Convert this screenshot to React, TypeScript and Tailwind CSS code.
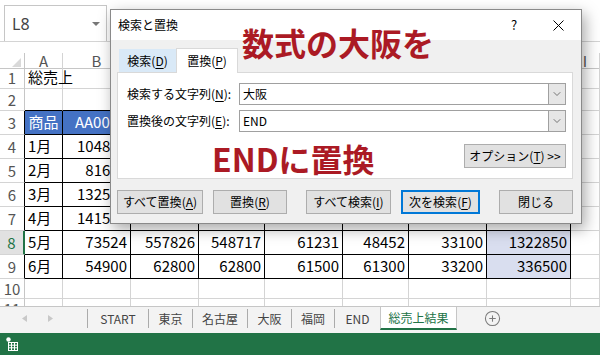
import { ChevronDown, CirclePlus } from "lucide-react";

const GRID = "grid grid-cols-[25px_38px_68px_68px_66px_78px_66px_78px_84px_1fr]";

const letters = ["A", "B", "C", "D", "E", "F", "G", "H", "I"];

const sheet: { n: number; h: string; cells: string[] }[] = [
  { n: 1, h: "h-[22px]", cells: ["総売上"] },
  { n: 2, h: "h-[22px]", cells: [] },
  { n: 3, h: "h-[24px]", cells: ["商品", "AA001", "AA002", "AA003", "AA004", "AA005", "AA006", "合計"] },
  { n: 4, h: "h-[24px]", cells: ["1月", "104852", "98200", "97500", "60100", "51200", "32900", "444752"] },
  { n: 5, h: "h-[24px]", cells: ["2月", "81634", "88400", "86300", "59800", "50600", "32800", "399534"] },
  { n: 6, h: "h-[24px]", cells: ["3月", "132540", "99100", "98200", "61000", "52300", "33000", "476140"] },
  { n: 7, h: "h-[24px]", cells: ["4月", "141580", "97600", "96400", "60800", "51900", "33100", "481380"] },
  { n: 8, h: "h-[24px]", cells: ["5月", "73524", "557826", "548717", "61231", "48452", "33100", "1322850"] },
  { n: 9, h: "h-[24px]", cells: ["6月", "54900", "62800", "62800", "61500", "61300", "33200", "336500"] },
  { n: 10, h: "h-[20px]", cells: [] },
  { n: 11, h: "h-[20px]", cells: [] },
];

function SheetCell({ r, c, v }: { r: number; c: number; v?: string }) {
  const tableRow = r >= 3 && r <= 9;
  const tableCol = c >= 1 && c <= 8;
  const right = tableRow && tableCol ? "border-r-black" : "border-r-[#d4d4d4]";
  const bottom = r >= 2 && r <= 9 && tableCol ? "border-b-black" : "border-b-[#d4d4d4]";
  const isHead = r === 3 && tableCol;
  const selected = (r === 8 || r === 9) && c === 8;
  const numeric = v !== undefined && /^\d+$/.test(v);

  return (
    <div
      className={`flex items-center overflow-visible whitespace-nowrap border-r border-b px-[3px] pb-[2px] text-[15px] leading-none ${right} ${bottom} ${
        isHead ? "justify-center bg-[#4472c4] text-white" : numeric ? "justify-end" : "justify-start"
      } ${selected ? "bg-[#d9deef]" : ""}`}
    >
      {v}
    </div>
  );
}

function RowHeader({ n }: { n: number }) {
  const active = n === 8;
  const tableRow = n >= 3 && n <= 9;
  return (
    <div
      className={`flex items-center justify-center border-b border-b-[#d4d4d4] pb-[1px] text-[15px] leading-none ${
        active
          ? "border-r-2 border-r-[#217346] bg-[#e1e1e1] text-[#217346]"
          : tableRow
            ? "border-r border-r-black text-[#555]"
            : "border-r border-r-[#c6c6c6] text-[#555]"
      }`}
    >
      {n}
    </div>
  );
}

function Underlined({ text, k }: { text: string; k: string }) {
  return (
    <>
      {text}(<span className="underline underline-offset-2">{k}</span>)
    </>
  );
}

function Combo({ value }: { value: string }) {
  return (
    <div className="flex h-[22px] flex-1 border border-[#a0a0a0] bg-white">
      <span className="flex flex-1 items-center pl-[3px] text-[12px]">{value}</span>
      <span className="flex w-[17px] items-center justify-center border-l border-[#a0a0a0] bg-[#e6e6e6]">
        <ChevronDown className="size-[12px] text-[#444]" strokeWidth={1.4} />
      </span>
    </div>
  );
}

function Button({ children, w, focus }: { children: React.ReactNode; w: string; focus?: boolean }) {
  return (
    <button
      type="button"
      className={`flex h-[24px] items-center justify-center bg-[#e1e1e1] text-[12px] text-black ${w} ${
        focus ? "border-2 border-[#0078d7]" : "border border-[#adadad]"
      }`}
    >
      {children}
    </button>
  );
}

const tabs = [
  { label: "START", w: "w-[60px]" },
  { label: "東京", w: "w-[43px]" },
  { label: "名古屋", w: "w-[54px]" },
  { label: "大阪", w: "w-[43px]" },
  { label: "福岡", w: "w-[42px]" },
  { label: "END", w: "w-[45px]" },
];

export default function App() {
  return (
    <div className="relative flex h-[355px] w-[600px] flex-col overflow-hidden bg-white font-['Noto_Sans_CJK_JP',sans-serif] text-black">
      {/* formula bar */}
      <div className="flex h-[42px] shrink-0 border-b border-[#d4d4d4] pl-[4px] pt-[5px]">
        <div className="flex h-full w-[103px] items-center border-x border-t border-[#c6c6c6] pl-[7px] pr-[6px]">
          <span className="font-['Noto_Sans',sans-serif] text-[16px] text-[#444]">L8</span>
          <svg className="ml-auto" width="8" height="4" viewBox="0 0 8 4">
            <polygon points="0,0 8,0 4,4" fill="#777" />
          </svg>
        </div>
      </div>
      <div className="h-[11px] shrink-0" />

      {/* sheet grid */}
      <div className="min-h-0 flex-1 overflow-hidden">
        <div className={`${GRID} h-[14px]`}>
          <div className="flex items-end justify-end border-r border-b border-[#c6c6c6] pr-[3px] pb-[1px]">
            <svg width="9" height="9" viewBox="0 0 9 9">
              <polygon points="9,0 9,9 0,9" fill="#d9d9d9" />
            </svg>
          </div>
          {letters.map((l) => (
            <div
              key={l}
              className="flex items-center justify-center border-r border-b border-r-[#d4d4d4] border-b-[#c6c6c6] text-[15px] leading-none text-[#555]"
            >
              {l}
            </div>
          ))}
        </div>
        {sheet.map((row) => (
          <div key={row.n} className={`${GRID} ${row.h}`}>
            <RowHeader n={row.n} />
            {letters.map((l, i) => (
              <SheetCell key={l} r={row.n} c={i + 1} v={row.cells[i]} />
            ))}
          </div>
        ))}
      </div>

      {/* sheet tabs */}
      <div className="flex h-[27px] shrink-0 items-start border-t border-[#c6c6c6] bg-[#f3f3f3] pb-[3px] text-[12px] text-[#444]">
        <div className="flex h-[23px] w-[87px] items-center pl-[22px]">
          <svg width="5" height="7" viewBox="0 0 5 7">
            <polygon points="5,0 5,7 0,3.5" fill="#c8c8c8" />
          </svg>
          <svg className="ml-[21px]" width="5" height="7" viewBox="0 0 5 7">
            <polygon points="0,0 0,7 5,3.5" fill="#c8c8c8" />
          </svg>
        </div>
        {tabs.map((t) => (
          <div key={t.label} className="flex h-[23px] items-center">
            <span className="h-[19px] w-px bg-[#ababab]" />
            <span className={`flex h-full items-center justify-center ${t.w}`}>{t.label}</span>
          </div>
        ))}
        <div className="flex h-[23px] w-[77px] items-center justify-center border-x border-b-2 border-x-[#c6c6c6] border-b-[#217346] bg-white text-[#217346]">
          総売上結果
        </div>
        <CirclePlus className="ml-[27px] mt-[3px] size-[17px] text-[#7a7a7a]" strokeWidth={1.5} />
      </div>

      {/* status bar */}
      <div className="flex h-[22px] shrink-0 items-center bg-[#217346] pl-[6px]">
        <svg width="12" height="14" viewBox="0 0 12 14">
          <circle cx="2.5" cy="2.5" r="2.2" fill="#fff" />
          <rect x="2.5" y="5.5" width="9" height="8" fill="none" stroke="#fff" strokeWidth="1" />
          <line x1="2.5" y1="8.2" x2="11.5" y2="8.2" stroke="#fff" strokeWidth="1" />
          <line x1="2.5" y1="10.8" x2="11.5" y2="10.8" stroke="#fff" strokeWidth="1" />
          <line x1="5.5" y1="5.5" x2="5.5" y2="13.5" stroke="#fff" strokeWidth="1" />
          <line x1="8.5" y1="5.5" x2="8.5" y2="13.5" stroke="#fff" strokeWidth="1" />
        </svg>
      </div>

      {/* find & replace dialog */}
      <div className="absolute left-[110px] top-[9px] flex h-[215px] w-[472px] flex-col border border-[#8a8a8a] bg-[#f0f0f0] shadow-[3px_5px_14px_rgba(0,0,0,0.35)]">
        <div className="flex h-[30px] shrink-0 items-center bg-white pl-[7px] text-[12px]">
          <span>検索と置換</span>
          <span className="ml-auto w-[12px] text-center text-[13px]">?</span>
          <svg className="ml-[33px] mr-[17px]" width="11" height="11" viewBox="0 0 11 11">
            <path d="M0.5 0.5 L10.5 10.5 M10.5 0.5 L0.5 10.5" stroke="#000" strokeWidth="1" />
          </svg>
        </div>

        <div className="flex flex-1 flex-col pl-[6px] pr-[8px] pt-[8px]">
          <div className="ml-[2px] flex h-[24px] items-end text-[12px]">
            <div className="flex h-[23px] w-[57px] items-center justify-center bg-[#d9e9f7]">
              <Underlined text="検索" k="D" />
            </div>
            <div className="relative z-10 -mb-px flex h-[25px] w-[62px] items-center justify-center border border-b-0 border-[#d9d9d9] bg-white">
              <Underlined text="置換" k="P" />
            </div>
          </div>

          <div className="flex h-[107px] flex-col border border-[#d9d9d9] bg-white pl-[9px] pr-[6px] pt-[10px] text-[12px]">
            <div className="flex items-center">
              <span className="w-[112px]">
                <Underlined text="検索する文字列" k="N" />:
              </span>
              <Combo value="大阪" />
            </div>
            <div className="mt-[5px] flex items-center">
              <span className="w-[112px]">
                <Underlined text="置換後の文字列" k="E" />:
              </span>
              <Combo value="END" />
            </div>
            <div className="mt-[12px] flex justify-end">
              <Button w="w-[102px]">
                オプション(<span className="underline underline-offset-2">T</span>)&nbsp;&gt;&gt;
              </Button>
            </div>
          </div>

          <div className="mt-[11px] flex">
            <Button w="w-[88px]">
              <Underlined text="すべて置換" k="A" />
            </Button>
            <div className="ml-[10px]">
              <Button w="w-[74px]">
                <Underlined text="置換" k="R" />
              </Button>
            </div>
            <div className="ml-[19px]">
              <Button w="w-[85px]">
                <Underlined text="すべて検索" k="I" />
              </Button>
            </div>
            <div className="ml-[10px]">
              <Button w="w-[79px]" focus>
                <Underlined text="次を検索" k="F" />
              </Button>
            </div>
            <div className="ml-[19px]">
              <Button w="w-[74px]">閉じる</Button>
            </div>
          </div>
        </div>
      </div>

      {/* annotations */}
      <div className="absolute left-[242px] top-[26px] text-[32px] font-bold leading-none text-[#ab1a24]">
        数式の大阪を
      </div>
      <div className="absolute left-[212px] top-[142px] text-[32px] font-bold leading-none text-[#ab1a24]">
        ENDに置換
      </div>
    </div>
  );
}
